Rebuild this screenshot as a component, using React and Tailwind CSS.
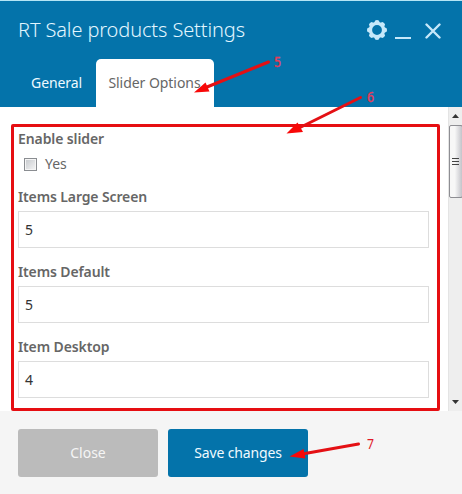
const fields = [
  { label: 'Items Large Screen', value: '5' },
  { label: 'Items Default', value: '5' },
  { label: 'Item Desktop', value: '4' },
];

function Gear() {
  const teeth = [0, 45, 90, 135, 180, 225, 270, 315];
  return (
    <svg className="h-5 w-5" viewBox="-10 -10 20 20" fill="#c6e8fa">
      {teeth.map((a) => (
        <path key={a} d="M-3.4-6 -1.8-9.6Q0-10.4 1.800-9.6L3.4-6Z" transform={`rotate(${a})`} />
      ))}
      <circle r="6.5" fill="none" stroke="#c6e8fa" strokeWidth="3.2" />
    </svg>
  );
}

function Header() {
  return (
    <header className="flex h-[107px] flex-col border-t border-[#b5e5f5] bg-[#0473aa]">
      <div className="flex h-[58px] items-center pl-[18px] pr-[21px]">
        <h1 className="flex-1 whitespace-nowrap text-[20px] font-light leading-[28px] tracking-[-0.12px] text-[#e2f6ff]">RT Sale products Settings</h1>
        <div className="flex h-5 items-start">
          <Gear />
          <div className="ml-2 mt-[17px] h-[2px] w-4 bg-[#c6e8fa]" />
          <svg className="ml-[14px] mt-[3px] h-4 w-4" viewBox="0 0 16 16" stroke="#c6e8fa" strokeWidth="2.4" strokeLinecap="round">
            <path d="M1.500 1.500 14.500 14.500M14.500 1.500 1.500 14.500" />
          </svg>
        </div>
      </div>
      <nav className="flex h-12 pl-[18px] text-[14px]">
        <div className="flex w-[78px] items-center justify-center pb-[2px] pr-px tracking-[-0.1px] text-[#eefaff]">General</div>
        <div className="flex w-[118px] items-center justify-center rounded-t-[5px] bg-white pb-[2px] pr-px tracking-[-0.05px] text-[#666]">Slider Options</div>
      </nav>
    </header>
  );
}

function Scrollbar() {
  return (
    <div className="flex w-[14px] flex-col items-center border-l border-[#e4e4e4] bg-[#eee]">
      <div className="flex h-[18px] items-center">
        <svg className="h-[4px] w-[7px]" viewBox="0 0 7 4"><path d="M0 4 3.5 0 7 4Z" fill="#333" /></svg>
      </div>
      <div className="flex h-[73px] w-[14px] flex-col items-center justify-center gap-[2px] rounded-[2px] border border-[#8e8e93] bg-linear-to-r from-[#f7f7f7] from-40% to-[#c4c4ca]">
        <div className="h-px w-[7px] bg-[#444]" />
        <div className="h-px w-[7px] bg-[#444]" />
        <div className="h-px w-[7px] bg-[#444]" />
      </div>
      <div className="flex flex-1 items-end pb-[7px]">
        <svg className="h-[4px] w-[7px]" viewBox="0 0 7 4"><path d="M0 0H7L3.5 4Z" fill="#333" /></svg>
      </div>
    </div>
  );
}

function Annotations() {
  return (
    <svg className="pointer-events-none absolute inset-0 h-[494px] w-[462px]" viewBox="0 0 462 494" fill="#f80808">
      <g stroke="#e41014" strokeWidth="3" strokeLinecap="round">
        <path d="M268.5 62 207 87" />
        <path d="M360.5 97.5 301 127" />
        <path d="M358.5 444 305 453.5" />
      </g>
      <path d="M194 92.5 205.500 82.500 207.500 87 209.500 91.500Z" />
      <path d="M286.500 133.500 297.500 122.500 300.500 127.500 303 132Z" />
      <path d="M289.500 456.500 303.500 449 304.500 453.500 305.500 458.500Z" />
      <g fontFamily="'Noto Sans', sans-serif" fontSize="14">
        <g fill="#e93a56" stroke="#e93a56" strokeWidth="0.4">
          <text x="274" y="67" textLength="7" lengthAdjust="spacingAndGlyphs">5</text>
          <text x="367" y="102" textLength="7" lengthAdjust="spacingAndGlyphs">6</text>
        </g>
        <text x="367" y="448.500" textLength="7" lengthAdjust="spacingAndGlyphs" fill="#e01828">7</text>
      </g>
    </svg>
  );
}

export default function App() {
  return (
    <div className="relative flex h-[494px] w-[462px] flex-col overflow-hidden bg-white font-['Noto_Sans','Open_Sans',sans-serif]">
      <Header />
      <main className="flex h-[304px]">
        <div className="flex-1 pl-[11px] pr-2 pt-[17px]">
          <form className="h-[287px] rounded-[2px] border-[3px] border-[#e60e12] pl-1 pr-2 pt-[2px]">
            <div className="text-[14px] font-semibold leading-[20px] tracking-[-0.1px] text-[#666]">Enable slider</div>
            <label className="flex h-[30px] items-center pl-[6px] text-[14px] text-[#666]">
              <span className="mr-[8px] h-[13px] w-[13px] border border-[#8a8d91] bg-linear-to-br from-[#c5c8cc] to-[#f6f6f6] shadow-[inset_0_0_0_1px_#f5f5f5]" />
              <span className="pb-[2px]">Yes</span>
            </label>
            {fields.map(({ label, value }) => (
              <div key={label} className="h-[75px] pt-[8px]">
                <div className="h-6 text-[14px] font-semibold leading-[20px] tracking-[-0.12px] text-[#666]">{label}</div>
                <div className="flex h-[37px] items-center border border-[#ddd] pl-[6px] text-[14px] text-[#333]">{value}</div>
              </div>
            ))}
          </form>
        </div>
        <Scrollbar />
      </main>
      <footer className="flex h-[83px] gap-[10px] bg-[#f5f5f5] pl-[18px] pt-[18px] text-[14px]">
        <button className="h-12 w-[140px] rounded-[3px] bg-[#bbb] pb-[2px] text-[#f5f5f5]">Close</button>
        <button className="h-12 w-[140px] rounded-[3px] bg-[#0473aa] pb-[2px] tracking-[-0.15px] text-[#f0faff]">Save changes</button>
      </footer>
      <Annotations />
    </div>
  );
}
